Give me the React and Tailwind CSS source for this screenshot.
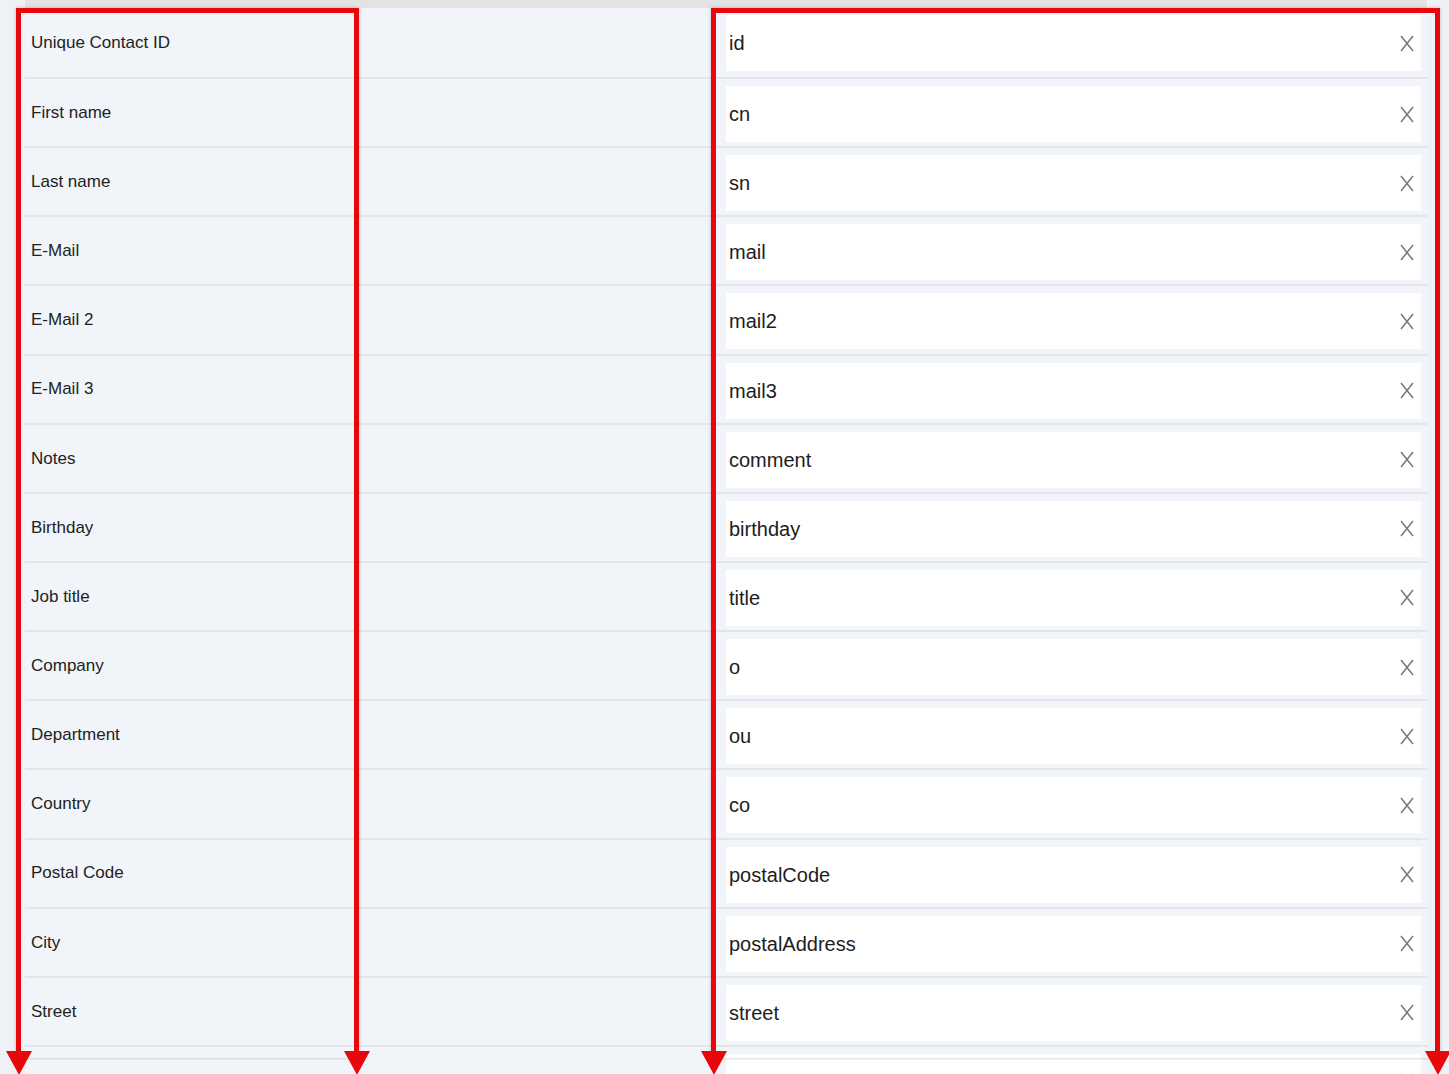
const rows = [
  ["Unique Contact ID", "id"],
  ["First name", "cn"],
  ["Last name", "sn"],
  ["E-Mail", "mail"],
  ["E-Mail 2", "mail2"],
  ["E-Mail 3", "mail3"],
  ["Notes", "comment"],
  ["Birthday", "birthday"],
  ["Job title", "title"],
  ["Company", "o"],
  ["Department", "ou"],
  ["Country", "co"],
  ["Postal Code", "postalCode"],
  ["City", "postalAddress"],
  ["Street", "street"],
  ["", ""],
];

function ClearIcon() {
  return (
    <svg width="14" height="17" viewBox="0 0 14 17" className="shrink-0">
      <path d="M1 1 L13 16 M13 1 L1 16" stroke="#777" strokeWidth="1.5" fill="none" />
    </svg>
  );
}

function Row({ label, value, first }) {
  return (
    <div
      className={
        first
          ? "flex h-[71px] shrink-0 border-b-2 border-[#e3e5e8]"
          : "flex h-[69.15px] shrink-0 border-b-2 border-[#e3e5e8]"
      }
    >
      <div className="w-[701px] pl-[6px] flex items-center text-[17px] text-[#222]">
        {label}
      </div>
      <div className="flex-1 pt-[7px] pr-[6px]">
        <div className="h-[56px] bg-white flex items-center pl-[3px] pr-[7px]">
          <span className="flex-1 text-[20px] text-[#1d1d1d]">{value}</span>
          <ClearIcon />
        </div>
      </div>
    </div>
  );
}

function Arrow({ left }) {
  return (
    <svg
      width="26"
      height="24"
      viewBox="0 0 26 24"
      className="absolute top-[1051px]"
      style={{ left }}
    >
      <path d="M0 0 L26 0 L13 24 Z" fill="#e8080c" />
    </svg>
  );
}

export default function App() {
  return (
    <div className="relative h-screen overflow-hidden bg-[#eef2f6] font-['Liberation_Sans',Arial,sans-serif]">
      <div className="ml-[25px] mr-[22px] flex flex-col bg-[#f1f5f9]">
        <div className="h-2 bg-[#e3e3e3] shrink-0" />
        {rows.map(([label, value], i) => (
          <Row key={i} label={label} value={value} first={i === 0} />
        ))}
      </div>

      {/* annotation boxes */}
      <div className="absolute left-[16px] top-[8px] w-[343px] h-[1050px] border-[5px] border-b-0 border-[#e8080c] shadow-[0_0_3px_rgba(0,0,0,0.25)]" />
      <div className="absolute left-[711px] top-[8px] w-[729px] h-[1050px] border-[5px] border-b-0 border-[#e8080c] shadow-[0_0_3px_rgba(0,0,0,0.25)]" />
      <Arrow left={5.5} />
      <Arrow left={343.5} />
      <Arrow left={700.5} />
      <Arrow left={1424.5} />
    </div>
  );
}
